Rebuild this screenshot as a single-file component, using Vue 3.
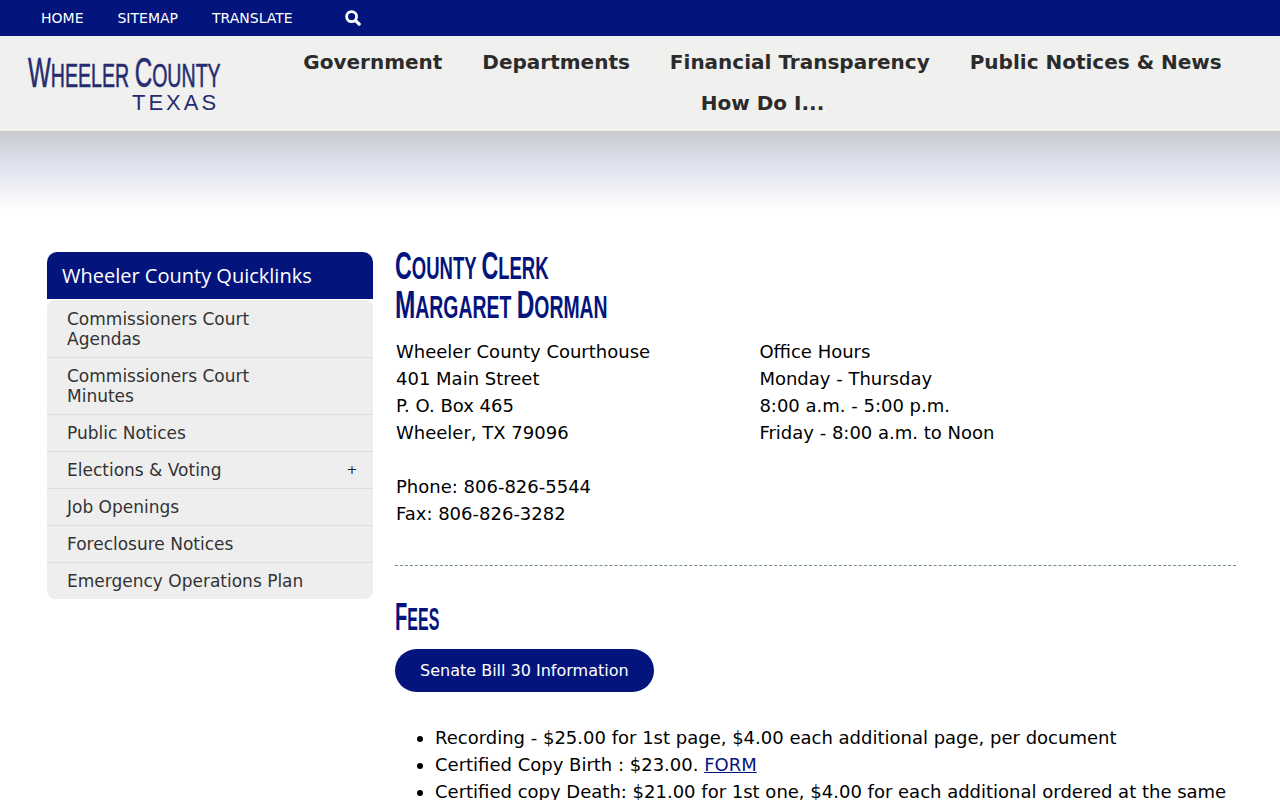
<script setup>
const topLinks = ['HOME', 'SITEMAP', 'TRANSLATE']
const navRow = [
  { label: 'Government' },
  { label: 'Departments', dot: true },
  { label: 'Financial Transparency' },
  { label: 'Public Notices & News', dot: true },
  { label: 'How Do I...', dot: true }
]
const quick = [
  { label: 'Commissioners Court Agendas' },
  { label: 'Commissioners Court Minutes' },
  { label: 'Public Notices' },
  { label: 'Elections & Voting', more: true },
  { label: 'Job Openings' },
  { label: 'Foreclosure Notices' },
  { label: 'Emergency Operations Plan' }
]
const address = ['Wheeler County Courthouse', '401 Main Street', 'P. O. Box 465', 'Wheeler, TX 79096']
const hours = ['Office Hours', 'Monday - Thursday', '8:00 a.m. - 5:00 p.m.', 'Friday - 8:00 a.m. to Noon']
</script>

<template>
  <div class="page">
    <div class="topbar">
      <a v-for="l in topLinks" :key="l" class="toplink">{{ l }}</a>
      <svg class="search" viewBox="0 0 16 16" width="16" height="16" aria-hidden="true">
        <circle cx="6.6" cy="6.6" r="5" fill="none" stroke="#fff" stroke-width="2.8" />
        <path d="M10.6 10.6 L14.2 14.2" stroke="#fff" stroke-width="3.2" stroke-linecap="round" />
      </svg>
    </div>
    <header class="header">
      <div class="logo">
        <div class="logo-main"><span class="squeeze"><span class="big">W</span>heeler <span class="big">C</span>ounty</span></div>
        <div class="logo-sub">TEXAS</div>
      </div>
      <nav class="nav">
        <a v-for="n in navRow" :key="n.label" class="navlink" :class="{ dotted: n.dot }">{{ n.label }}</a>
      </nav>
    </header>
    <div class="fade"></div>
    <div class="content">
      <aside class="side">
        <div class="side-head">Wheeler County Quicklinks</div>
        <ul class="side-list">
          <li v-for="q in quick" :key="q.label" class="side-item">
            <span class="side-label">{{ q.label }}</span>
            <span v-if="q.more" class="plus">+</span>
          </li>
        </ul>
      </aside>
      <main class="main">
        <h1 class="title">
          <span class="line l1"><span class="cap">C</span>ounty <span class="cap">C</span>lerk</span><br />
          <span class="line l2"><span class="cap">M</span>argaret <span class="cap">D</span>orman</span>
        </h1>
        <div class="info">
          <div class="col-a">
            <div v-for="a in address" :key="a">{{ a }}</div>
            <div class="gap">Phone: 806-826-5544</div>
            <div>Fax: 806-826-3282</div>
          </div>
          <div class="col-b">
            <div v-for="h in hours" :key="h">{{ h }}</div>
          </div>
        </div>
        <hr class="rule" />
        <h2 class="title fees"><span class="line l3"><span class="cap">F</span>ees</span></h2>
        <a class="pill">Senate Bill 30 Information</a>
        <ul class="fee-list">
          <li>Recording - $25.00 for 1st page, $4.00 each additional page, per document</li>
          <li>Certified Copy Birth : $23.00. <a class="form">FORM</a></li>
          <li>Certified copy Death: $21.00 for 1st one, $4.00 for each additional ordered at the same time</li>
        </ul>
      </main>
    </div>
  </div>
</template>

<style>
html, body { margin: 0; overflow: hidden; background: #fff; }
</style>

<style scoped>
.page { height: 800px; overflow: hidden; font-family: "DejaVu Sans", sans-serif; color: #000; position: relative; }
.topbar { height: 36px; background: #03157d; display: flex; align-items: center; padding-left: 41px; box-sizing: border-box; }
.toplink { color: #fff; font-size: 14px; margin-right: 34px; }
.search { margin-left: 18px; }
.header { height: 95px; background: #f0f0ee; display: flex; position: relative; z-index: 1; }
.logo { width: 260px; padding: 21px 0 0 28px; box-sizing: border-box; color: #262c70; flex: none; }
.logo-main { font-family: "Liberation Sans Narrow", "Liberation Sans", sans-serif; font-size: 34px; font-weight: 400; -webkit-text-stroke: 0.6px #262c70; line-height: 36px; white-space: nowrap; text-transform: uppercase; }
.squeeze { display: inline-block; transform: scaleX(0.576); transform-origin: left center; }
.big { font-size: 42px; line-height: 0; }
.logo-sub { font-size: 22px; letter-spacing: 3px; line-height: 20px; margin-left: 104px; font-family: "Liberation Sans", sans-serif; }
.nav { flex: 1; display: flex; flex-wrap: wrap; justify-content: center; align-content: flex-start; padding: 6px 15px 0 0; }
.navlink { font-size: 20px; font-weight: 700; color: #2b2b2b; line-height: 41px; margin: 0 20px; white-space: nowrap; position: relative; }
.dotted::after { content: ""; position: absolute; right: -2px; top: 26px; width: 2px; height: 2px; border-radius: 50%; background: #fff; }
.fade { height: 80px; background: linear-gradient(#c8cacd 0%, #dde1ec 40%, #fff 100%); }
.content { display: flex; padding: 38px 44px 0 47px; align-items: flex-start; }
.side { width: 326px; flex: none; margin: 3px 22px 0 0; }
.side-head { height: 47px; background: #03157d; color: #fff; border-radius: 10px 10px 0 0; font-family: "Open Sans", sans-serif; font-size: 20px; line-height: 47px; padding-left: 15px; }
.side-list { list-style: none; margin: 1px 0 0; padding: 1px 0 0; background: #eee; border-radius: 8px; color: #333; font-size: 17px; line-height: 20px; }
.side-item { padding: 8px 15.5px 8px 20px; border-bottom: 1px solid #ddd; display: flex; justify-content: space-between; align-items: center; }
.side-item:last-child { border-bottom: 0; }
.side-label { width: 240px; }
.plus { font-size: 13px; color: #222; }
.main { flex: 1; min-width: 0; font-size: 18px; line-height: 27px; }
.title { margin: 0; font-family: "Liberation Sans Narrow", "Liberation Sans", sans-serif; font-weight: 700; font-size: 31px; line-height: 39px; color: #03157d; white-space: nowrap; text-transform: uppercase; }
.cap { font-size: 39px; line-height: 0; }
.line { display: inline-block; transform-origin: left center; }
.l1 { transform: scaleX(0.597); }
.l2 { transform: scaleX(0.626); }
.l3 { transform: scaleX(0.516); }
.info { display: flex; margin-top: 11px; padding-left: 1px; }
.col-a { width: 363.4px; }
.gap { margin-top: 27px; }
.rule { border: 0; border-top: 1px dashed #6d8a96; margin: 38px 0 0; }
.fees { margin-top: 34px; }
.pill { display: inline-block; margin-top: 10px; background: #03157d; color: #fff; font-size: 16px; line-height: 43px; padding: 0 25px; border-radius: 22px; }
.fee-list { margin: 32px 0 0; padding-left: 40px; }
.form { color: #03157d; text-decoration: underline; }
</style>
